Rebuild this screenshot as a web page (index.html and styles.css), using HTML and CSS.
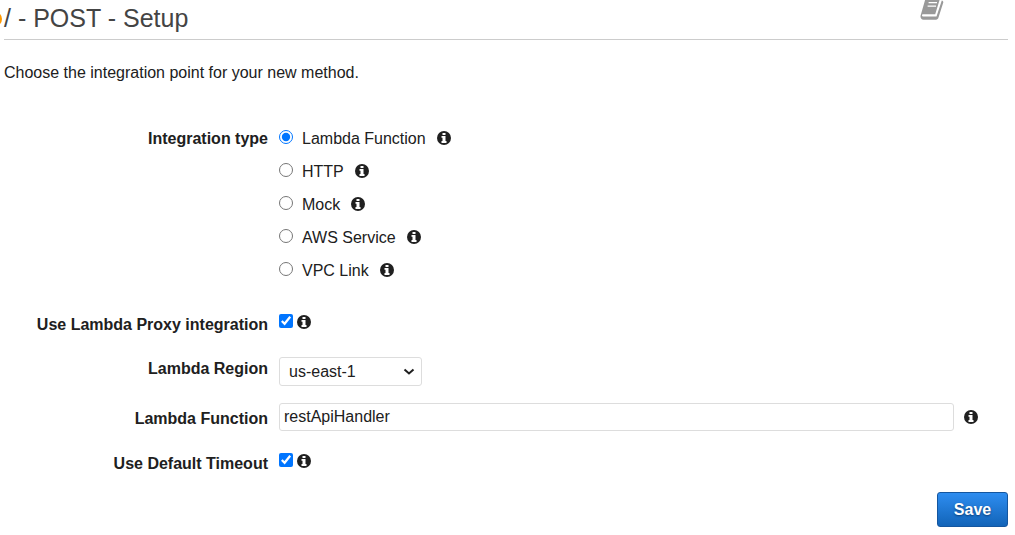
FILE: index.html
```html
<!DOCTYPE html>
<html lang="en">
<head>
<meta charset="utf-8">
<title>/ - POST - Setup</title>
<link rel="stylesheet" href="styles.css">
</head>
<body>
<svg class="defs" aria-hidden="true">
  <symbol id="info" viewBox="0 0 14 14">
    <circle cx="7" cy="7" r="7" fill="#202020"/>
    <path fill="#fff" d="M5.500 1.900h3v2.200h-3zM4.500 5h4v5.100h1v1.800h-5v-1.800h1V6.800h-1z"/>
  </symbol>
</svg>
<main class="page">
  <header class="header">
    <span class="marker"></span>
    <h1 class="title">/ - POST - Setup</h1>
    <a class="docs" href="#" aria-label="Documentation">
      <svg class="book" viewBox="0 0 24 24">
        <path fill="#999" d="M6.500 0H20.200L15.200 16.200H3.200C1.500 16.200 1.700 18.600 3.200 18.600H16.500L21.800 2.500C23.200 3 23.500 3.800 23.200 4.800L18.500 19.600C18.100 21 17.200 21.700 16 21.700H3.500C1.200 21.700 0 19.400 .7 17.300L5 2.200C5.300 1 5.800 0 6.500 0Z"/>
        <path fill="none" stroke="#fff" stroke-width="1.300" d="M8.600 4.600H17M7.600 8.100H16"/>
      </svg>
    </a>
  </header>
  <p class="intro">Choose the integration point for your new method.</p>
  <form class="form">
    <div class="row types" role="radiogroup" aria-labelledby="type-label">
      <span class="label" id="type-label">Integration type</span>
      <div class="options">
        <div class="option"><input class="radio" type="radio" name="type" id="t1" checked><label for="t1">Lambda Function</label><svg class="info"><use href="#info"/></svg></div>
        <div class="option"><input class="radio" type="radio" name="type" id="t2"><label for="t2">HTTP</label><svg class="info"><use href="#info"/></svg></div>
        <div class="option"><input class="radio" type="radio" name="type" id="t3"><label for="t3">Mock</label><svg class="info"><use href="#info"/></svg></div>
        <div class="option"><input class="radio" type="radio" name="type" id="t4"><label for="t4">AWS Service</label><svg class="info"><use href="#info"/></svg></div>
        <div class="option"><input class="radio" type="radio" name="type" id="t5"><label for="t5">VPC Link</label><svg class="info"><use href="#info"/></svg></div>
      </div>
    </div>
    <div class="row proxy">
      <label class="label" for="proxy">Use Lambda Proxy integration</label>
      <div class="check"><input class="checkbox" type="checkbox" id="proxy" checked><svg class="info"><use href="#info"/></svg></div>
    </div>
    <div class="row region">
      <label class="label" for="region">Lambda Region</label>
      <div class="picker">
        <select class="select" id="region"><option>us-east-1</option></select>
        <svg class="chevron" viewBox="0 0 12 8"><path fill="none" stroke="#202020" stroke-width="2" d="M1.500 1.500L6 5.500L10.500 1.500"/></svg>
      </div>
    </div>
    <div class="row function">
      <label class="label" for="function">Lambda Function</label>
      <div class="field"><input class="text" type="text" id="function" value="restApiHandler"><svg class="info"><use href="#info"/></svg></div>
    </div>
    <div class="row timeout">
      <label class="label" for="timeout">Use Default Timeout</label>
      <div class="check"><input class="checkbox" type="checkbox" id="timeout" checked><svg class="info"><use href="#info"/></svg></div>
    </div>
    <div class="actions"><button class="save" type="button">Save</button></div>
  </form>
</main>
</body>
</html>
```
FILE: styles.css
```css
* { box-sizing: border-box; }
body {
  margin: 0;
  background: #fff;
  color: #202020;
  font: 16px/24px "Liberation Sans", Arial, sans-serif;
}
.defs { position: absolute; width: 0; height: 0; }
.page { padding: 0 7px 0 4px; }
.header {
  display: flex;
  justify-content: space-between;
  height: 40px;
  border-bottom: 1px solid #ccc;
}
.marker {
  position: absolute;
  left: -11px;
  top: 12px;
  width: 13px;
  height: 14px;
  border: 2px solid #f90;
  border-radius: 50%;
}
.title {
  margin: 0;
  color: #444;
  font-size: 25px;
  font-weight: 400;
  line-height: 36px;
}
.docs { height: 24px; margin-right: 64px; }
.book { display: block; width: 24px; height: 24px; margin-top: -2px; }
.intro { margin: 21px 0 37px; }
.row {
  display: grid;
  grid-template-columns: 264px 1fr;
  column-gap: 11px;
  align-items: start;
}
.label { font-weight: 700; text-align: right; }
.types .label { padding-top: 5px; }
.option { display: flex; align-items: center; height: 33px; }
.radio, .checkbox {
  flex: none;
  width: 14px;
  height: 14px;
  margin: 0 0 3px;
  accent-color: #0075ff;
}
.radio { margin-right: 9px; }
.info { flex: none; width: 14px; height: 14px; }
.option .info { margin: 0 0 2px 11px; }
.check { display: flex; align-items: center; gap: 4px; height: 24px; }
.proxy { margin-top: 23px; }
.proxy .label, .timeout .label { padding-top: 3px; }
.region { margin-top: 20px; }
.picker { position: relative; width: 143px; }
.select, .text {
  display: block;
  width: 100%;
  border: 1px solid #ddd;
  border-radius: 3px;
  background: #fff;
  color: #202020;
  font: 16px "Liberation Sans", Arial, sans-serif;
}
.select { appearance: none; height: 29px; padding: 0 24px 0 9px; }
.chevron {
  position: absolute;
  right: 7px;
  top: 11px;
  width: 12px;
  height: 8px;
  pointer-events: none;
}
.function { margin-top: 17px; }
.function .label { padding-top: 4px; }
.field { display: flex; align-items: center; gap: 10px; padding-right: 30px; }
.text { flex: 1; height: 28px; padding: 0 4px; }
.timeout { margin-top: 18px; }
.actions { display: flex; justify-content: flex-end; margin-top: 16px; }
.save {
  width: 71px;
  height: 35px;
  padding: 0;
  border: 1px solid #14569f;
  border-radius: 3px;
  background: linear-gradient(#2e8df0, #1264b8);
  color: #fff;
  font: 700 16px "Liberation Sans", Arial, sans-serif;
  text-shadow: 0 1px 2px #0a3d75;
}
```
